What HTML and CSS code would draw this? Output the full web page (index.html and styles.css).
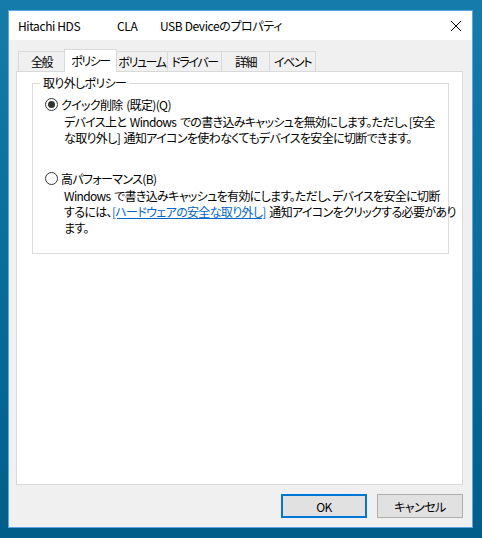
FILE: index.html
```html
<!DOCTYPE html>
<html lang="ja">
<head>
<meta charset="utf-8">
<link rel="stylesheet" href="styles.css">
</head>
<body>
<div class="window">
  <div class="titlebar">
    <span class="title">
      <span class="t1">Hitachi HDS</span><span class="t2">CLA</span><span class="t3">USB Deviceのプロパティ</span>
    </span>
    <svg class="close" width="12" height="12" viewBox="0 0 12 12"><path d="M1 1 L11 11 M11 1 L1 11" stroke="#000" stroke-width="1" fill="none"/></svg>
  </div>
  <div class="body">
    <div class="tabs">
      <div class="tab w46">全般</div>
      <div class="tab sel w52">ポリシー</div>
      <div class="tab w51">ボリューム</div>
      <div class="tab w54">ドライバー</div>
      <div class="tab w48">詳細</div>
      <div class="tab w46">イベント</div>
    </div>
    <div class="panel">
      <fieldset class="group">
        <legend>取り外しポリシー</legend>
        <div class="option first">
          <span class="radio checked"></span><span class="label">クイック削除 (既定)(Q)</span>
        </div>
        <div class="desc">デバイス上と Windows での書き込みキャッシュを無効にします。ただし、[安全<br>な取り外し] 通知アイコンを使わなくてもデバイスを安全に切断できます。</div>
        <div class="option second">
          <span class="radio"></span><span class="label">高パフォーマンス(B)</span>
        </div>
        <div class="desc">Windows で書き込みキャッシュを有効にします。ただし、デバイスを安全に切断<br>するには、<a class="link">[ハードウェアの安全な取り外し]</a> 通知アイコンをクリックする必要があり<br>ます。</div>
      </fieldset>
    </div>
    <div class="buttons">
      <button class="btn default">OK</button>
      <button class="btn">キャンセル</button>
    </div>
  </div>
</div>
</body>
</html>
```
FILE: styles.css
```css
html, body {
  margin: 0;
  padding: 0;
}
body {
  width: 482px;
  height: 538px;
  overflow: hidden;
  background: linear-gradient(180deg, #147cab 0%, #0a6c9b 50%, #005e8a 100%);
  font-family: "Noto Sans CJK JP", "Noto Sans", sans-serif;
  font-size: 12px;
  color: #000;
  font-feature-settings: "palt";
  letter-spacing: -0.65px;
  word-spacing: 1.5px;
}
.window {
  margin: 10px 0 0 8px;
  width: 463px;
  height: 516px;
  border: 1px solid #5ea5e6;
  background: #f0f0f0;
  display: flex;
  flex-direction: column;
}
.titlebar {
  height: 29px;
  background: #fff;
  display: flex;
  align-items: center;
  justify-content: space-between;
  padding: 0 9px 0 9px;
}
.title {
  display: flex;
  white-space: nowrap;
  line-height: 16px;
  letter-spacing: -0.4px;
  word-spacing: 0;
}
.t1 { width: 99px; overflow: hidden; }
.t2 { width: 43px; }
.close { margin-right: 1px; }
.body {
  flex: 1;
  padding: 9px 9px 0 7px;
  display: flex;
  flex-direction: column;
}
.tabs {
  display: flex;
  height: 22px;
  padding-left: 2px;
  position: relative;
  z-index: 1;
}
.tab {
  box-sizing: border-box;
  height: 20px;
  margin-top: 2px;
  margin-right: -1px;
  border: 1px solid #d9d9d9;
  border-bottom: none;
  background: #f0f0f0;
  text-align: center;
  line-height: 19px;
  white-space: nowrap;
  letter-spacing: -1.4px;
}
.tab.sel {
  background: #fff;
  height: 23px;
  margin-top: 0;
  line-height: 22px;
  position: relative;
  z-index: 2;
}
.w46 { width: 47px; }
.w52 { width: 53px; }
.w51 { width: 52px; }
.w54 { width: 55px; }
.w48 { width: 49px; }
.panel {
  width: 445px;
  height: 412px;
  background: #fff;
  border: 1px solid #d9d9d9;
  padding: 0;
}
.group {
  margin: 3px 0 0 15px;
  padding: 0;
  width: 415px;
  height: 177px;
  border: 1px solid #dcdcdc;
  min-width: 0;
}
.group legend {
  margin-left: 7px;
  padding: 0 3px;
  line-height: 16px;
}
.option {
  display: flex;
  align-items: center;
  height: 16px;
  white-space: nowrap;
}
.option.first { margin: 5px 0 0 12px; }
.option.second { margin: 24px 0 0 12px; }
.radio {
  box-sizing: border-box;
  width: 13px;
  height: 13px;
  border: 1px solid #333;
  border-radius: 50%;
  background: #fff;
  display: flex;
  align-items: center;
  justify-content: center;
  margin-right: 3px;
}
.radio.checked::after {
  content: "";
  width: 7px;
  height: 7px;
  border-radius: 50%;
  background: #333;
}
.desc {
  margin: 2px 0 0 31px;
  line-height: 16px;
  white-space: nowrap;
}
.link {
  color: #0066cc;
  text-decoration: underline;
}
.buttons {
  display: flex;
  justify-content: flex-end;
  gap: 10px;
  margin-top: 9px;
}
.btn {
  box-sizing: border-box;
  width: 86px;
  height: 24px;
  background: #e1e1e1;
  border: 1px solid #adadad;
  font-family: inherit;
  font-size: 12px;
  padding: 0;
  color: #000;
  font-feature-settings: "palt";
  letter-spacing: -0.5px;
}
.btn.default {
  border: 2px solid #0078d7;
}
```
